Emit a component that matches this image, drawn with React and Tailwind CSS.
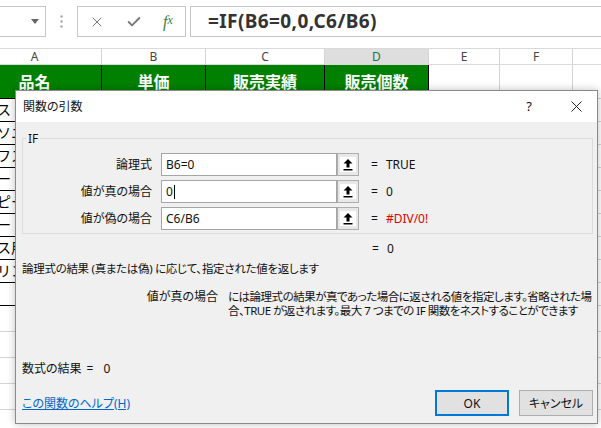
import React from 'react';
import { X, Check } from 'lucide-react';

const COLS = [134, 104, 119, 104, 71, 73, 120];
const NAMES = ['ス', 'ソニ', 'フス', 'ー', 'ピー', 'ー', 'ス用', 'リン', ''];

const UpArrow = () => (
  <svg width="10" height="12" viewBox="0 0 10 12">
    <polygon points="5,0 9.5,4.5 6.5,4.5 6.5,8.5 3.5,8.5 3.5,4.5 0.5,4.5" fill="#000" />
    <rect x="0.5" y="10" width="9" height="1.5" fill="#000" />
  </svg>
);

const ArgRow = ({ label, value, result, red, cursor }) => (
  <div className="flex items-center h-[23px]">
    <div className="w-[129px] shrink-0 text-right">{label}</div>
    <div className="ml-[9px] w-[176px] shrink-0 h-[23px] bg-white border border-[#a5a5a5] flex items-center pl-[4px]">
      <span>{value}</span>
      {cursor && <span className="w-px h-[14px] bg-black ml-px" />}
    </div>
    <div className="w-[22px] shrink-0 h-[23px] border border-[#adadad] bg-[#e8e8e8] flex items-center justify-center">
      <div className="w-[16px] h-[15px] bg-white flex items-center justify-center">
        <UpArrow />
      </div>
    </div>
    <span className="ml-[12px]">=</span>
    <span className={'ml-[8px] ' + (red ? 'text-[#e00000]' : '')}>{result}</span>
  </div>
);

const Dialog = () => (
  <div className="absolute left-[15px] top-[90px] w-[583px] h-[334px] border border-[#8a8a8a] shadow-[0_0_8px_rgba(0,0,0,0.25)] flex flex-col font-['Noto_Sans','Noto_Sans_CJK_JP',sans-serif] [font-feature-settings:'palt'] text-[12px] text-[#111] leading-[15px]">
    <div className="h-[31px] bg-white flex items-center pl-[7px]">
      <span>関数の引数</span>
      <span className="ml-auto text-[13px]">?</span>
      <svg className="ml-[39px] mr-[15px]" width="11" height="11" viewBox="0 0 11 11">
        <path d="M0.5 0.5 L10.5 10.5 M10.5 0.5 L0.5 10.5" stroke="#222" strokeWidth="1" />
      </svg>
    </div>

    <div className="h-[301px] bg-[#f0f0f0] flex flex-col">
      <div className="relative mt-[16px] ml-[6px] mr-[4px] h-[96px] border border-[#dcdcdc] pt-[14px] flex flex-col gap-[4px]">
        <span className="absolute left-[3px] top-[-8px] bg-[#f0f0f0] px-[2px]">IF</span>
        <ArgRow label="論理式" value="B6=0" result="TRUE" />
        <ArgRow label="値が真の場合" value="0" result="0" cursor />
        <ArgRow label="値が偽の場合" value="C6/B6" result="#DIV/0!" red />
      </div>

      <div className="mt-[7px] pl-[356px] h-[15px]">
        =<span className="ml-[8px]">0</span>
      </div>
      <div className="mt-[5px] pl-[6px] h-[15px] whitespace-nowrap text-[11.5px] tracking-[-0.3px]">
        論理式の結果 (真または偽) に応じて、指定された値を返します
      </div>

      <div className="mt-[14px] flex leading-[14px]">
        <div className="w-[202px] shrink-0 text-right">値が真の場合</div>
        <div className="ml-[10px] shrink-0 whitespace-nowrap text-[11.5px] tracking-[-0.5px]">
          には論理式の結果が真であった場合に返される値を指定します。省略された場
          <br />
          合、TRUE が返されます。最大 7 つまでの IF 関数をネストすることができます
        </div>
      </div>

      <div className="mt-[44px] pl-[6px] h-[14px] leading-[14px] flex">
        <span>数式の結果</span>
        <span className="ml-[5px]">=</span>
        <span className="ml-[10px]">0</span>
      </div>

      <div className="mt-[14px] h-[26px] flex items-center pl-[6px] pr-[4px]">
        <a className="text-[#0066cc] underline cursor-pointer">この関数のヘルプ(H)</a>
        <button className="ml-auto w-[74px] h-[26px] bg-[#e1e1e1] border-2 border-[#0078d7]">OK</button>
        <button className="ml-[10px] w-[74px] h-[26px] bg-[#e1e1e1] border border-[#adadad]">キャンセル</button>
      </div>
    </div>
  </div>
);

const App = () => {
  const dataRows = Array.from({ length: 9 });
  const emptyRows = Array.from({ length: 4 });
  return (
    <div className="relative w-[601px] h-[428px] overflow-hidden bg-white font-['Noto_Sans','Noto_Sans_CJK_JP',sans-serif]">
      {/* formula bar */}
      <div className="h-[48px] flex items-start pt-[6px]">
        <div className="w-[46px] h-[31px] border border-l-0 border-[#c6c6c6] flex items-center justify-end pr-[6px]">
          <svg width="8" height="5" viewBox="0 0 8 5"><polygon points="0,0 8,0 4,5" fill="#666" /></svg>
        </div>
        <div className="w-[31px] h-[31px] flex items-center justify-center">
          <svg width="3" height="13" viewBox="0 0 3 13">
            <circle cx="1.5" cy="1.5" r="1.2" fill="#aaa" />
            <circle cx="1.5" cy="6.5" r="1.2" fill="#aaa" />
            <circle cx="1.5" cy="11.5" r="1.2" fill="#aaa" />
          </svg>
        </div>
        <div className="w-[109px] h-[31px] border border-[#c6c6c6] flex items-center">
          <div className="w-[37px] flex justify-center"><X size={16} strokeWidth={1.5} color="#777" /></div>
          <div className="w-[37px] flex justify-center"><Check size={16} strokeWidth={2.8} color="#777" /></div>
          <div className="w-[32px] flex justify-center text-[#3a7f3a] italic font-['Liberation_Serif',serif] text-[16px] leading-none">
            f<span className="text-[12px]">x</span>
          </div>
        </div>
        <div className="ml-[4px] flex-1 h-[31px] border border-r-0 border-[#c6c6c6] pl-[17px] flex items-center text-[19px] font-bold tracking-[0.4px] text-[#333]">
          =IF(B6=0,0,C6/B6)
        </div>
      </div>

      {/* grid */}
      <div className="ml-[-32px] flex flex-col">
        <div className="flex h-[17px] border-t border-[#dadada] border-b border-[#ababab] text-[12px] leading-[15px] text-[#444]">
          {['A', 'B', 'C', 'D', 'E', 'F', ''].map((c, i) => (
            <div
              key={i}
              style={{ width: COLS[i] }}
              className={'shrink-0 text-center border-r border-[#d4d4d4] ' + (c === 'D' ? 'bg-[#dedede] text-[#217346]' : '')}
            >
              {c}
            </div>
          ))}
        </div>
        <div className="flex h-[34px]">
          {['品名', '単価', '販売実績', '販売個数', '', '', ''].map((c, i) => (
            <div
              key={i}
              style={{ width: COLS[i] }}
              className={
                'shrink-0 flex items-center justify-center border-b ' +
                (i < 4
                  ? 'bg-[#008000] text-white font-bold text-[16px] border-r border-black'
                  : 'border-r border-[#d4d4d4] border-b-[#d4d4d4]')
              }
            >
              {c}
            </div>
          ))}
        </div>
        {dataRows.map((_, r) => (
          <div key={r} className="flex h-[23px]">
            {COLS.map((w, i) => (
              <div
                key={i}
                style={{ width: w }}
                className={
                  'shrink-0 border-r border-b text-[14px] leading-[22px] whitespace-nowrap overflow-hidden ' +
                  (i < 4 ? 'border-black' : 'border-[#d4d4d4]')
                }
              >
                {i === 0 && <span className="pl-[29px]">{NAMES[r]}</span>}
              </div>
            ))}
          </div>
        ))}
        {emptyRows.map((_, r) => (
          <div key={r} className="flex h-[26px]">
            {COLS.map((w, i) => (
              <div key={i} style={{ width: w }} className="shrink-0 border-r border-b border-[#d4d4d4]" />
            ))}
          </div>
        ))}
      </div>

      <Dialog />
    </div>
  );
};

export default App;
